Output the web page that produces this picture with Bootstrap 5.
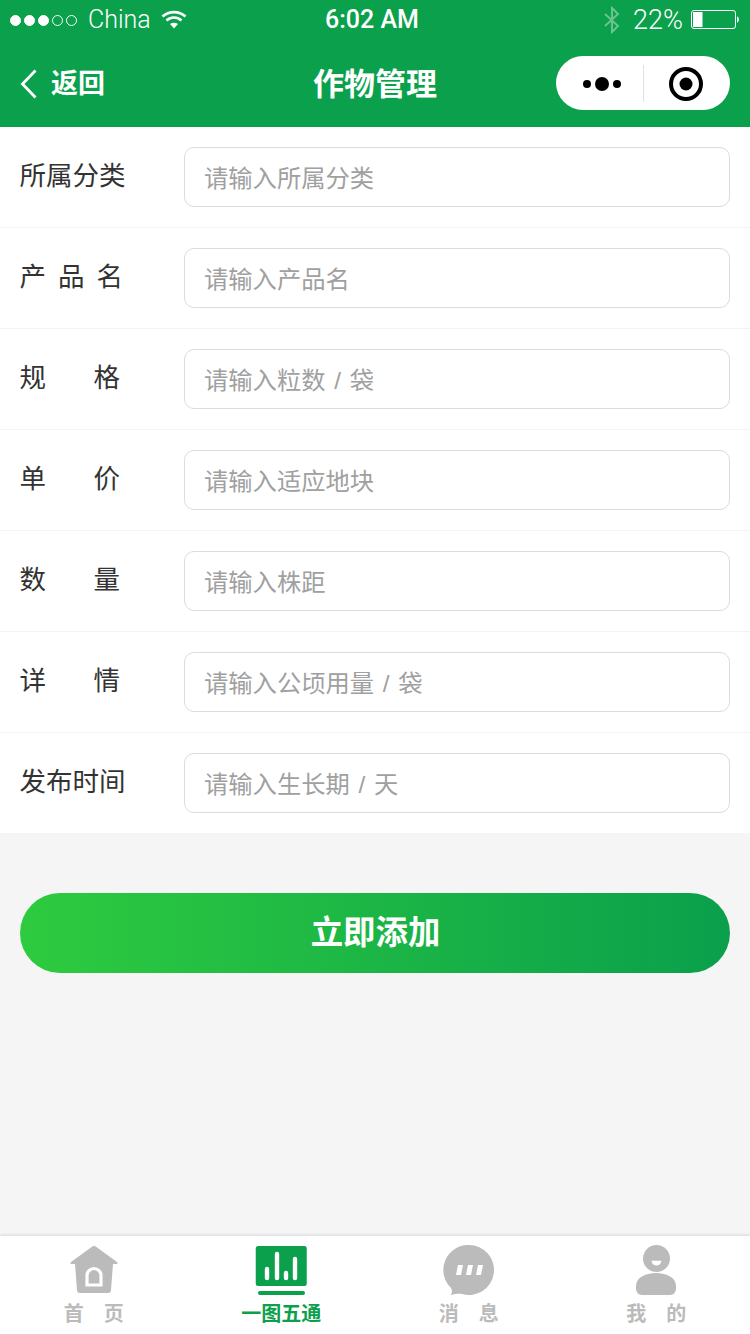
<!DOCTYPE html>
<html lang="zh-CN">
<head>
<meta charset="utf-8">
<title>作物管理</title>
<link rel="stylesheet" href="https://cdn.jsdelivr.net/npm/bootstrap@5.3.0/dist/css/bootstrap.min.css">
<style>
html,body{margin:0;height:1334px;overflow:hidden}
body{font-family:"Liberation Sans","Noto Sans CJK SC",sans-serif;background:#f5f5f5;color:#333}
.app-shell{height:1334px}
.top-area{background:#0aa04c;color:#fff}
.status-line{height:40px;padding:0 10px;position:relative}
.sig{width:11px;height:11px;border-radius:50%;border:1px solid #fff;margin-right:3px}
.sig.on{background:#fff}
.carrier{font-family:Roboto,"Liberation Sans",sans-serif;font-weight:300;font-size:25px;margin-left:8px;margin-right:10px;line-height:40px}
.clock{position:absolute;left:0;right:6px;top:0;text-align:center;font-family:Roboto,"Liberation Sans",sans-serif;font-weight:500;font-size:25px;line-height:40px;pointer-events:none}
.pct{font-family:Roboto,"Liberation Sans",sans-serif;font-weight:300;font-size:27px;line-height:40px;margin:0 8px 0 12px}
.bar-nav{height:87px;padding:0 20px;position:relative}
.back-text{font-size:27px;font-weight:700;margin-left:13px;position:relative;top:1px}
.page-title{position:absolute;left:0;right:0;top:1px;line-height:87px;text-align:center;font-size:31px;font-weight:700;margin:0}
.capsule{width:174px;height:54px;background:#fff;border-radius:27px;margin-top:-1px}
.capsule-dots{width:87px;height:100%;padding:2px 0 0 4px}
.capsule-ring{width:86px;height:100%;padding:2px 2px 0 0}
.capsule-line{width:1px;height:37px;background:#e0e0e0}
.sheet{background:#fff}
.field-row{height:101px;padding:20px 20px 0 19.500px;border-bottom:1px solid #f3f3f3;align-items:flex-start}
.field-row:last-child{border-bottom:0;height:100px}
.field-name{width:164.500px;flex:none;font-size:26.5px;line-height:58px;color:#333;margin:0}
.gap-a{letter-spacing:12px}
.gap-b{letter-spacing:47.500px}
.field-input.form-control{height:60px;border:1px solid #dcdcdc;border-radius:10px;font-size:24.300px;word-spacing:2px;padding:3px 19px 0;color:#333;background:#fff;box-shadow:none}
.field-input.form-control::placeholder{color:#a0a0a0}
.add-zone{padding:60px 20px 0}
.add-btn.btn{height:80px;border:0;border-radius:40px;color:#fff;font-size:32.400px;font-weight:700;background:linear-gradient(90deg,#2ecb3f,#0aa04c);padding:1px 0 0 1px}
.tabs{height:98px;background:#fff;box-shadow:0 -1px 3px rgba(0,0,0,.12)}
.tab-item{width:187.5px;height:98px;padding-top:9px;color:#bbb;font-size:20px;font-weight:700;text-decoration:none;line-height:26px}
.tab-item.active-tab{color:#0aa04c}
.tab-icon{height:52px;width:52px;display:block;margin-bottom:4px}
</style>
</head>
<body>
<div class="app-shell d-flex flex-column">
  <header class="top-area">
    <div class="status-line d-flex align-items-center">
      <span class="sig on"></span><span class="sig on"></span><span class="sig on"></span><span class="sig"></span><span class="sig"></span>
      <span class="carrier">China</span>
      <svg width="26" height="20" viewBox="0 0 26 20" fill="none" stroke="#fff" stroke-width="2.6"><path d="M1.5 6.5C8 .6 18 .6 24.500 6.500"/><path d="M5.500 10.500C10 6.500 16 6.500 20.500 10.500"/><path d="M13 18.500l-4-4.500c2.300-1.600 5.700-1.600 8 0z" fill="#fff" stroke="none"/></svg>
      <span class="clock">6:02 AM</span>
      <svg class="ms-auto" width="18" height="28" viewBox="0 0 18 28" fill="none" stroke="#6cc392" stroke-width="2"><path d="M2 8l13 12-6 6V2l6 6L2 20"/></svg>
      <span class="pct">22%</span>
      <svg width="49" height="20" viewBox="0 0 49 20"><rect x=".5" y=".5" width="44" height="18" rx="2.500" fill="none" stroke="#fff"/><rect x="2" y="2" width="9.500" height="15" fill="#fff"/><path d="M46 6.500c2.500 0 2.500 6 0 6z" fill="#fff"/></svg>
    </div>
    <nav class="bar-nav d-flex align-items-center justify-content-between">
      <div class="d-flex align-items-center">
        <svg width="18" height="30" viewBox="0 0 18 30" fill="none" stroke="#fff" stroke-width="2.800"><path d="M15.500 1.500L2.500 15l13 13.500"/></svg>
        <span class="back-text">返回</span>
      </div>
      <h1 class="page-title">作物管理</h1>
      <div class="capsule d-flex align-items-center position-relative">
        <div class="capsule-dots d-flex align-items-center justify-content-center">
          <svg width="38" height="14" viewBox="0 0 38 14"><circle cx="4" cy="7" r="4"/><circle cx="19" cy="7" r="7"/><circle cx="34" cy="7" r="4"/></svg>
        </div>
        <span class="capsule-line"></span>
        <div class="capsule-ring d-flex align-items-center justify-content-center">
          <svg width="34" height="34" viewBox="0 0 34 34"><circle cx="17" cy="17" r="15" fill="none" stroke="#000" stroke-width="4"/><circle cx="17" cy="17" r="6.500"/></svg>
        </div>
      </div>
    </nav>
  </header>
  <main class="flex-grow-1">
    <form>
      <div class="sheet">
        <div class="field-row d-flex"><label class="field-name">所属分类</label><input class="field-input form-control" placeholder="请输入所属分类"></div>
        <div class="field-row d-flex"><label class="field-name gap-a">产品名</label><input class="field-input form-control" placeholder="请输入产品名"></div>
        <div class="field-row d-flex"><label class="field-name gap-b">规格</label><input class="field-input form-control" placeholder="请输入粒数 / 袋"></div>
        <div class="field-row d-flex"><label class="field-name gap-b">单价</label><input class="field-input form-control" placeholder="请输入适应地块"></div>
        <div class="field-row d-flex"><label class="field-name gap-b">数量</label><input class="field-input form-control" placeholder="请输入株距"></div>
        <div class="field-row d-flex"><label class="field-name gap-b">详情</label><input class="field-input form-control" placeholder="请输入公顷用量 / 袋"></div>
        <div class="field-row d-flex"><label class="field-name">发布时间</label><input class="field-input form-control" placeholder="请输入生长期 / 天"></div>
      </div>
      <div class="add-zone"><button type="button" class="add-btn btn w-100">立即添加</button></div>
    </form>
  </main>
  <footer class="tabs d-flex">
    <a class="tab-item d-flex flex-column align-items-center" href="#">
      <svg class="tab-icon" viewBox="0 0 52 52"><path fill="#bbb" d="M26 1a3 3 0 0 1 2 .700L49 17c1 1 .500 2-1 2h-3l-2 26a3 3 0 0 1-3 3H12a3 3 0 0 1-3-3L7 19H4c-1.500 0-2-1-1-2L24 1.700A3 3 0 0 1 26 1z"/><path fill="none" stroke="#fff" stroke-width="3.200" d="M19 40V30.500a7 7 0 0 1 14 0V40z"/></svg>
      <span>首&emsp;页</span>
    </a>
    <a class="tab-item active-tab d-flex flex-column align-items-center" href="#">
      <svg class="tab-icon" viewBox="0 0 52 52"><rect x=".75" y="1" width="51" height="40" rx="2.500" fill="#0aa04c"/><rect x="3" y="46" width="47" height="4" rx="2" fill="#0aa04c"/><g stroke="#fff" stroke-width="4.400" stroke-linecap="round"><path d="M12 24v9M22 9v24M31 28v5M40 14v19"/></g></svg>
      <span>一图五通</span>
    </a>
    <a class="tab-item d-flex flex-column align-items-center" href="#">
      <svg class="tab-icon" viewBox="0 0 52 52"><path fill="#bbb" d="M26 0a25 25 0 1 1-7 49c-3-.500-7 0-11 1 1-2 1.500-5 0-7A25 25 0 0 1 26 0z"/><path fill="#fff" d="M15 20h5l-2 10h-5zM25 20h5l-2 10h-5zM35 20h5l-2 10h-5z"/></svg>
      <span>消&emsp;息</span>
    </a>
    <a class="tab-item d-flex flex-column align-items-center" href="#">
      <svg class="tab-icon" viewBox="0 0 52 52"><circle cx="26.500" cy="13.500" r="13.500" fill="#bbb"/><path fill="#fff" d="M21.500 15.700h10c-1 6.500-9 6.500-10 0z"/><path fill="#bbb" d="M6 41c0-8 9-13 20-13s20 5 20 13v3a6 6 0 0 1-6 6H12a6 6 0 0 1-6-6z"/></svg>
      <span>我&emsp;的</span>
    </a>
  </footer>
</div>
<script src="https://cdn.jsdelivr.net/npm/bootstrap@5.3.0/dist/js/bootstrap.bundle.min.js"></script>
</body>
</html>
